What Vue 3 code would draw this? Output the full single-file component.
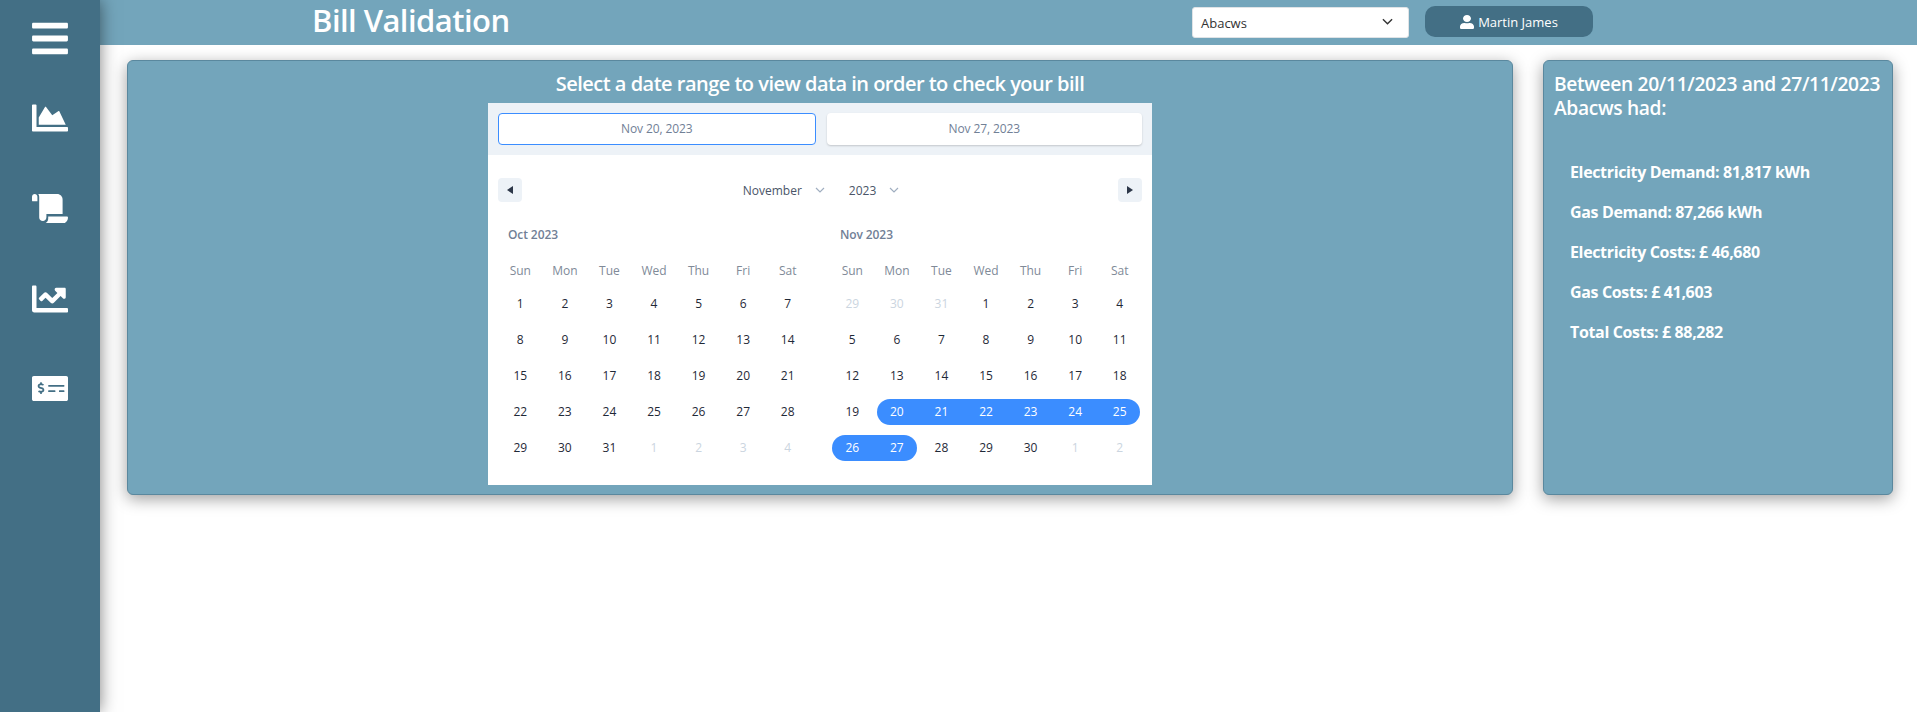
<template>
  <div class="page">
    <aside class="sidebar">
      <svg class="nav-icon menu" viewBox="0 0 448 512"><path d="M16 132h416c8.837 0 16-7.163 16-16V76c0-8.837-7.163-16-16-16H16C7.163 60 0 67.163 0 76v40c0 8.837 7.163 16 16 16zm0 160h416c8.837 0 16-7.163 16-16v-40c0-8.837-7.163-16-16-16H16c-8.837 0-16 7.163-16 16v40c0 8.837 7.163 16 16 16zm0 160h416c8.837 0 16-7.163 16-16v-40c0-8.837-7.163-16-16-16H16c-8.837 0-16 7.163-16 16v40c0 8.837 7.163 16 16 16z" /></svg>
      <svg class="nav-icon area" viewBox="0 0 512 512"><path d="M500 384c6.6 0 12 5.4 12 12v40c0 6.6-5.4 12-12 12H12c-6.6 0-12-5.4-12-12V76c0-6.6 5.4-12 12-12h40c6.6 0 12 5.4 12 12v308h436zM372.700 159.500L288 216l-85.300-113.700c-5.100-6.800-15.500-6.300-19.900 1L96 248v104h384l-89.900-187.800c-3.200-6.500-11.400-8.700-17.400-4.700z" /></svg>
      <svg class="nav-icon scroll" viewBox="0 0 640 512"><path d="M48 0C21.530 0 0 21.530 0 48v64c0 8.840 7.160 16 16 16h80V48C96 21.530 74.470 0 48 0zm208 412.570V352h288V96c0-52.940-43.060-96-96-96H111.590C121.740 13.410 128 29.920 128 48v368c0 38.870 34.580 69.650 74.500 63.120C234.220 474 256 444.460 256 412.570zM288 384v48c0 52.940-43.060 96-96 96h336c61.860 0 112-50.140 112-112 0-8.840-7.160-16-16-16H288z" /></svg>
      <svg class="nav-icon line" viewBox="0 0 512 512"><path d="M496 384H64V80c0-8.840-7.160-16-16-16H16C7.160 64 0 71.160 0 80v336c0 17.670 14.330 32 32 32h464c8.840 0 16-7.160 16-16v-32c0-8.840-7.160-16-16-16zM464 96H345.940c-21.380 0-32.090 25.850-16.970 40.970l32.400 32.400L288 242.750l-73.370-73.370c-12.500-12.500-32.760-12.500-45.250 0l-68.690 68.690c-6.250 6.250-6.250 16.380 0 22.630l22.620 22.620c6.250 6.250 16.380 6.250 22.630 0L192 237.250l73.370 73.370c12.500 12.500 32.760 12.500 45.250 0l96-96 32.400 32.400c15.120 15.120 40.970 4.410 40.970-16.970V112c0-8.840-7.160-16-16-16z" /></svg>
      <svg class="nav-icon money" viewBox="0 0 640 512"><path d="M608 32H32C14.330 32 0 46.330 0 64v384c0 17.670 14.330 32 32 32h576c17.670 0 32-14.330 32-32V64c0-17.670-14.330-32-32-32zM176 327.880V344c0 4.420-3.580 8-8 8h-16c-4.420 0-8-3.580-8-8v-16.290c-11.290-.58-22.270-4.520-31.370-11.350-3.900-2.930-4.100-8.770-.57-12.140l11.750-11.210c2.770-2.640 6.890-2.760 10.130-.73 3.870 2.420 8.260 3.720 12.820 3.720h28.110c6.500 0 11.800-5.920 11.800-13.190 0-5.950-3.610-11.190-8.770-12.730l-45-13.500c-18.590-5.580-31.580-23.420-31.580-43.390 0-24.520 19.050-44.440 42.670-45.070V152c0-4.420 3.580-8 8-8h16c4.420 0 8 3.580 8 8v16.290c11.290.58 22.270 4.510 31.370 11.350 3.900 2.930 4.100 8.770.57 12.140l-11.750 11.210c-2.770 2.640-6.890 2.760-10.130.73-3.870-2.430-8.260-3.720-12.820-3.720h-28.110c-6.500 0-11.800 5.920-11.800 13.190 0 5.950 3.610 11.190 8.770 12.730l45 13.500c18.590 5.580 31.580 23.420 31.580 43.390 0 24.530-19.050 44.440-42.670 45.070zM416 312c0 4.420-3.580 8-8 8H296c-4.420 0-8-3.580-8-8v-16c0-4.420 3.580-8 8-8h112c4.420 0 8 3.580 8 8v16zm160 0c0 4.420-3.580 8-8 8h-80c-4.420 0-8-3.580-8-8v-16c0-4.420 3.580-8 8-8h80c4.420 0 8 3.580 8 8v16zm0-96c0 4.420-3.580 8-8 8H296c-4.420 0-8-3.580-8-8v-16c0-4.420 3.580-8 8-8h272c4.420 0 8 3.580 8 8v16z" /></svg>
    </aside>

    <main class="main">
      <header class="topbar">
        <h1 class="page-title">Bill Validation</h1>
        <div class="site-select">
          <span>Abacws</span>
          <svg class="select-arrow" viewBox="0 0 12 7"><path d="M1 1l5 5 5-5" /></svg>
        </div>
        <div class="user-btn">
          <svg class="user-icon" viewBox="0 0 448 512" preserveAspectRatio="none"><path d="M224 256c70.700 0 128-57.300 128-128S294.700 0 224 0 96 57.300 96 128s57.300 128 128 128zm89.600 32h-16.700c-22.200 10.200-46.900 16-72.900 16s-50.600-5.800-72.900-16h-16.700C60.200 288 0 348.200 0 422.400V464c0 26.500 21.500 48 48 48h352c26.500 0 48-21.500 48-48v-41.600c0-74.200-60.200-134.400-134.400-134.400z" /></svg>
          <span>Martin James</span>
        </div>
      </header>

      <section class="content">
        <div class="card picker-card">
          <h2 class="card-title">Select a date range to view data in order to check your bill</h2>
          <div class="calendar">
            <div class="date-inputs">
              <div class="date-input active">Nov 20, 2023</div>
              <div class="date-input">Nov 27, 2023</div>
            </div>
            <div class="cal-nav">
              <div class="nav-btn"><span class="tri left"></span></div>
              <div class="cal-selects">
                <span class="cal-select month-select">November<svg class="cal-chevron" viewBox="0 0 10 6"><path d="M1 1l4 4 4-4" /></svg></span>
                <span class="cal-select">2023<svg class="cal-chevron" viewBox="0 0 10 6"><path d="M1 1l4 4 4-4" /></svg></span>
              </div>
              <div class="nav-btn"><span class="tri right"></span></div>
            </div>
            <div class="months">
              <div v-for="m in months" :key="m.label" class="month">
                <div class="month-label">{{ m.label }}</div>
                <div class="grid">
                  <div v-for="w in weekdays" :key="w" class="weekday">{{ w }}</div>
                  <div v-for="(d, i) in m.days" :key="i" class="day" :class="d.cls">
                    <span>{{ d.n }}</span>
                  </div>
                </div>
              </div>
            </div>
          </div>
        </div>

        <div class="card summary-card">
          <h2 class="summary-title">Between 20/11/2023 and 27/11/2023 Abacws had:</h2>
          <ul class="summary-list">
            <li v-for="s in summary" :key="s">{{ s }}</li>
          </ul>
        </div>
      </section>
    </main>
  </div>
</template>

<script setup>
const weekdays = ['Sun', 'Mon', 'Tue', 'Wed', 'Thu', 'Fri', 'Sat']

function range(a, b, cls = '') {
  const out = []
  for (let n = a; n <= b; n++) out.push({ n, cls })
  return out
}

// the selection wraps at the end of the week, so each row gets its own rounded ends
const novDays = [
  ...range(29, 31, 'muted'),
  ...range(1, 19),
  { n: 20, cls: 'picked first' },
  ...range(21, 24, 'picked'),
  { n: 25, cls: 'picked last' },
  { n: 26, cls: 'picked first' },
  { n: 27, cls: 'picked last' },
  ...range(28, 30),
  ...range(1, 2, 'muted'),
]

const months = [
  { label: 'Oct 2023', days: [...range(1, 31), ...range(1, 4, 'muted')] },
  { label: 'Nov 2023', days: novDays },
]

const summary = [
  'Electricity Demand: 81,817 kWh',
  'Gas Demand: 87,266 kWh',
  'Electricity Costs: £ 46,680',
  'Gas Costs: £ 41,603',
  'Total Costs: £ 88,282',
]
</script>

<style>
html, body { margin: 0; background: #fff; }
</style>

<style scoped>
.page {
  display: flex;
  min-height: 712px;
  font-family: "Open Sans", "Noto Sans", sans-serif;
  overflow: hidden;
}
.sidebar {
  flex: 0 0 100px;
  background: #436f85;
  box-shadow: 0 0 16px rgba(0,0,0,0.5);
  position: relative;
  z-index: 2;
  display: flex;
  flex-direction: column;
  align-items: center;
}
.nav-icon { width: 36px; fill: #fff; display: block; }
.menu { height: 41px; margin-top: 18px; }
.area { height: 36px; margin-top: 41px; }
.scroll { height: 29px; margin-top: 58px; }
.line { height: 36px; margin-top: 58px; }
.money { height: 29px; margin-top: 57px; }

.main { flex: 1; min-width: 0; }
.topbar {
  height: 45px;
  background: #73a5bb;
  display: flex;
  align-items: center;
  padding: 0 324px 0 212px;
}
.page-title {
  margin: 0 auto 6px 0;
  color: #fff;
  font-size: 31px;
  font-weight: 600;
  line-height: 40px;
  letter-spacing: -0.55px;
}
.site-select {
  width: 217px;
  height: 31px;
  box-sizing: border-box;
  padding: 0 15px 0 8px;
  background: #fff;
  border: 1px solid #dfe3e6;
  border-radius: 3px;
  display: flex;
  align-items: center;
  justify-content: space-between;
  color: #333;
  font-size: 13px;
}
.select-arrow { width: 11px; height: 7px; fill: none; stroke: #333; stroke-width: 1.5; margin-top: -3px; }
.user-btn {
  width: 168px;
  height: 31px;
  margin-left: 16px;
  margin-top: -2px;
  background: #436f85;
  border-radius: 10px;
  color: #fff;
  font-size: 13px;
  display: flex;
  align-items: center;
  justify-content: center;
  gap: 4px;
}
.user-icon { width: 14px; height: 14px; fill: #fff; }

.content {
  display: flex;
  gap: 30px;
  padding: 15px 24px 0 27px;
}
.card {
  height: 435px;
  box-sizing: border-box;
  background: #73a5bb;
  border: 1px solid #5a889e;
  border-radius: 6px;
  box-shadow: 0 4px 16px rgba(0,0,0,0.38);
  color: #fff;
}
.picker-card {
  flex: 1;
  display: flex;
  flex-direction: column;
  align-items: center;
}
.card-title {
  margin: 6px 0 2px;
  font-size: 20px;
  font-weight: 600;
  line-height: 34px;
  letter-spacing: -0.51px;
}
.calendar {
  width: 664px;
  height: 382px;
  background: #fff;
  color: #2d3748;
}
.date-inputs {
  display: flex;
  gap: 11px;
  height: 52px;
  box-sizing: border-box;
  padding: 10px;
  background: #edf2f7;
}
.date-input {
  flex: 1;
  height: 32px;
  box-sizing: border-box;
  background: #fff;
  border-radius: 4px;
  box-shadow: 0 1px 2px rgba(0,0,0,0.18);
  color: #718096;
  font-size: 12px;
  text-align: center;
  line-height: 32px;
  letter-spacing: -0.1px;
}
.date-input.active { border: 1px solid #3b8dff; line-height: 30px; box-shadow: none; }
.cal-nav {
  display: flex;
  align-items: center;
  justify-content: space-between;
  padding: 23px 10px 0;
}
.nav-btn {
  width: 24px;
  height: 24px;
  background: #edf2f7;
  border-radius: 4px;
  display: flex;
  align-items: center;
  justify-content: center;
}
.tri { width: 0; height: 0; border-top: 4px solid transparent; border-bottom: 4px solid transparent; }
.tri.left { border-right: 6px solid #2d3748; }
.tri.right { border-left: 6px solid #2d3748; }
.cal-selects {
  display: flex;
  gap: 24px;
  margin-left: 2px;
  font-size: 12px;
  color: #4a5568;
}
.cal-select { display: flex; align-items: center; gap: 13px; }
.cal-chevron { width: 10px; height: 6px; fill: none; stroke: #a0aec0; stroke-width: 1.2; }
.months {
  display: flex;
  gap: 20px;
  padding: 0 10px;
}
.month { width: 312px; }
.month-label {
  margin: 23px 0 0 10px;
  color: #718096;
  font-size: 12px;
  font-weight: 600;
  line-height: 20px;
  letter-spacing: -0.1px;
}
.grid {
  display: grid;
  grid-template-columns: repeat(7, 1fr);
  grid-template-rows: 33px;
  grid-auto-rows: 36px;
  margin-top: 8px;
}
.weekday {
  height: 33px;
  color: #808a98;
  font-size: 12px;
  text-align: center;
  line-height: 35px;
}
.day {
  display: flex;
  align-items: center;
  color: #1f2937;
  font-size: 12px;
}
.day span {
  flex: 1;
  height: 26px;
  line-height: 26px;
  text-align: center;
}
.day.muted { color: #cbd5e0; }
.day.picked span { background: #3b8dff; color: #fff; }
.day.first span { margin-left: 2px; padding-right: 2px; border-radius: 13px 0 0 13px; }
.day.last span { margin-right: 2px; padding-left: 2px; border-radius: 0 13px 13px 0; }

.summary-card {
  flex: 0 0 350px;
  padding: 11px 3px 0 10px;
}
.summary-title {
  margin: 0;
  font-size: 19.2px;
  font-weight: 600;
  line-height: 24px;
  letter-spacing: -0.33px;
}
.summary-list {
  list-style: none;
  margin: 32px 0 0;
  padding: 0 0 0 16px;
}
.summary-list li {
  height: 40px;
  font-size: 16px;
  font-weight: 700;
  line-height: 40px;
  letter-spacing: -0.35px;
}
</style>
